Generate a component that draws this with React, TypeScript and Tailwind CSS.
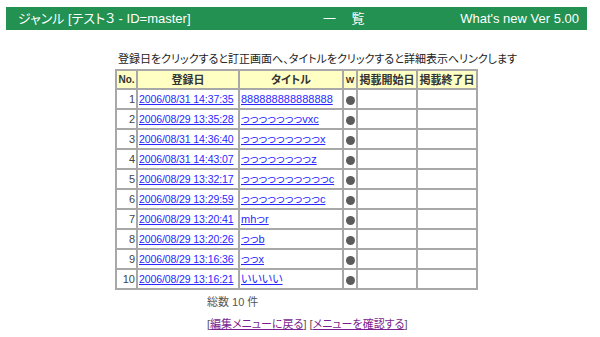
import React from "react";

const rows = [
  { no: 1, date: "2006/08/31 14:37:35", title: "888888888888888" },
  { no: 2, date: "2006/08/29 13:35:28", title: "っっっっっっっvxc" },
  { no: 3, date: "2006/08/31 14:36:40", title: "っっっっっっっっっx" },
  { no: 4, date: "2006/08/31 14:43:07", title: "っっっっっっっっz" },
  { no: 5, date: "2006/08/29 13:32:17", title: "っっっっっっっっっっc" },
  { no: 6, date: "2006/08/29 13:29:59", title: "っっっっっっっっっc" },
  { no: 7, date: "2006/08/29 13:20:41", title: "mhっr" },
  { no: 8, date: "2006/08/29 13:20:26", title: "っっb" },
  { no: 9, date: "2006/08/29 13:16:36", title: "っっx" },
  { no: 10, date: "2006/08/29 13:16:21", title: "いいいい" },
];

const font =
  "font-['Liberation_Sans','Noto_Sans_CJK_JP',sans-serif] [font-feature-settings:'palt']";

export default function App() {
  return (
    <div className={`w-[600px] h-[337px] bg-white text-[#222] ${font}`}>
      {/* title bar */}
      <div className="pt-[7px] px-[6px] w-[593px]">
        <div className="flex items-center h-[23px] bg-[#229152] text-white text-[13px] pl-[12px] pr-[8px]">
          <div className="w-[305px]">ジャンル [テスト３ - ID=master]</div>
          <div className="tracking-[6px]">一 覧</div>
          <div className="ml-auto">What's new Ver 5.00</div>
        </div>
      </div>

      {/* list */}
      <div className="w-[593px] flex flex-col items-center">
        <div className="w-[361px] text-[11px] mt-[22px] leading-[14px] pl-[2px] whitespace-nowrap">
          登録日をクリックすると訂正画面へ、タイトルをクリックすると詳細表示へリンクします
        </div>
        <table className="mt-[3px] border-separate border-spacing-0 border border-[#a8a8a8] text-[11px] leading-[14px]">
          <thead>
            <tr className="bg-[#ffffc4] font-bold text-[#333]">
              <th className="w-[21px] h-[19px] border border-[#a8a8a8] text-[10px] p-0">No.</th>
              <th className="w-[102px] border border-[#a8a8a8] p-0">登録日</th>
              <th className="w-[104px] border border-[#a8a8a8] p-0">タイトル</th>
              <th className="w-[14px] border border-[#a8a8a8] text-[9px] p-0">W</th>
              <th className="w-[60px] border border-[#a8a8a8] p-0">掲載開始日</th>
              <th className="w-[60px] border border-[#a8a8a8] p-0">掲載終了日</th>
            </tr>
          </thead>
          <tbody>
            {rows.map((r) => (
              <tr key={r.no} className="h-[20px]">
                <td className="border border-[#a8a8a8] text-right pr-[1px] text-[#444]">{r.no}</td>
                <td className="border border-[#a8a8a8] px-[1px] whitespace-nowrap">
                  <a href="#" className="text-[#2828ff] underline text-[10.5px] tracking-[-0.1px]">
                    {r.date}
                  </a>
                </td>
                <td className="border border-[#a8a8a8] px-[1px] whitespace-nowrap">
                  <a href="#" className="text-[#2828ff] underline">
                    {r.title}
                  </a>
                </td>
                <td className="border border-[#a8a8a8] text-center p-0">
                  <span className="inline-block w-[9px] h-[9px] rounded-full bg-[#5c5c5c] align-middle" />
                </td>
                <td className="border border-[#a8a8a8]" />
                <td className="border border-[#a8a8a8]" />
              </tr>
            ))}
          </tbody>
        </table>

        <div className="w-[181px] text-[11px] leading-[14px] text-[#555] mt-[3px] ml-[2px]">
          <div className="py-[2px]">総数 10 件</div>
          <div className="mt-[6px] whitespace-nowrap">
            [<a href="#" className="text-[#7a1f8f] underline">編集メニューに戻る</a>]
            {" "}
            [<a href="#" className="text-[#7a1f8f] underline">メニューを確認する</a>]
          </div>
        </div>
      </div>
    </div>
  );
}
